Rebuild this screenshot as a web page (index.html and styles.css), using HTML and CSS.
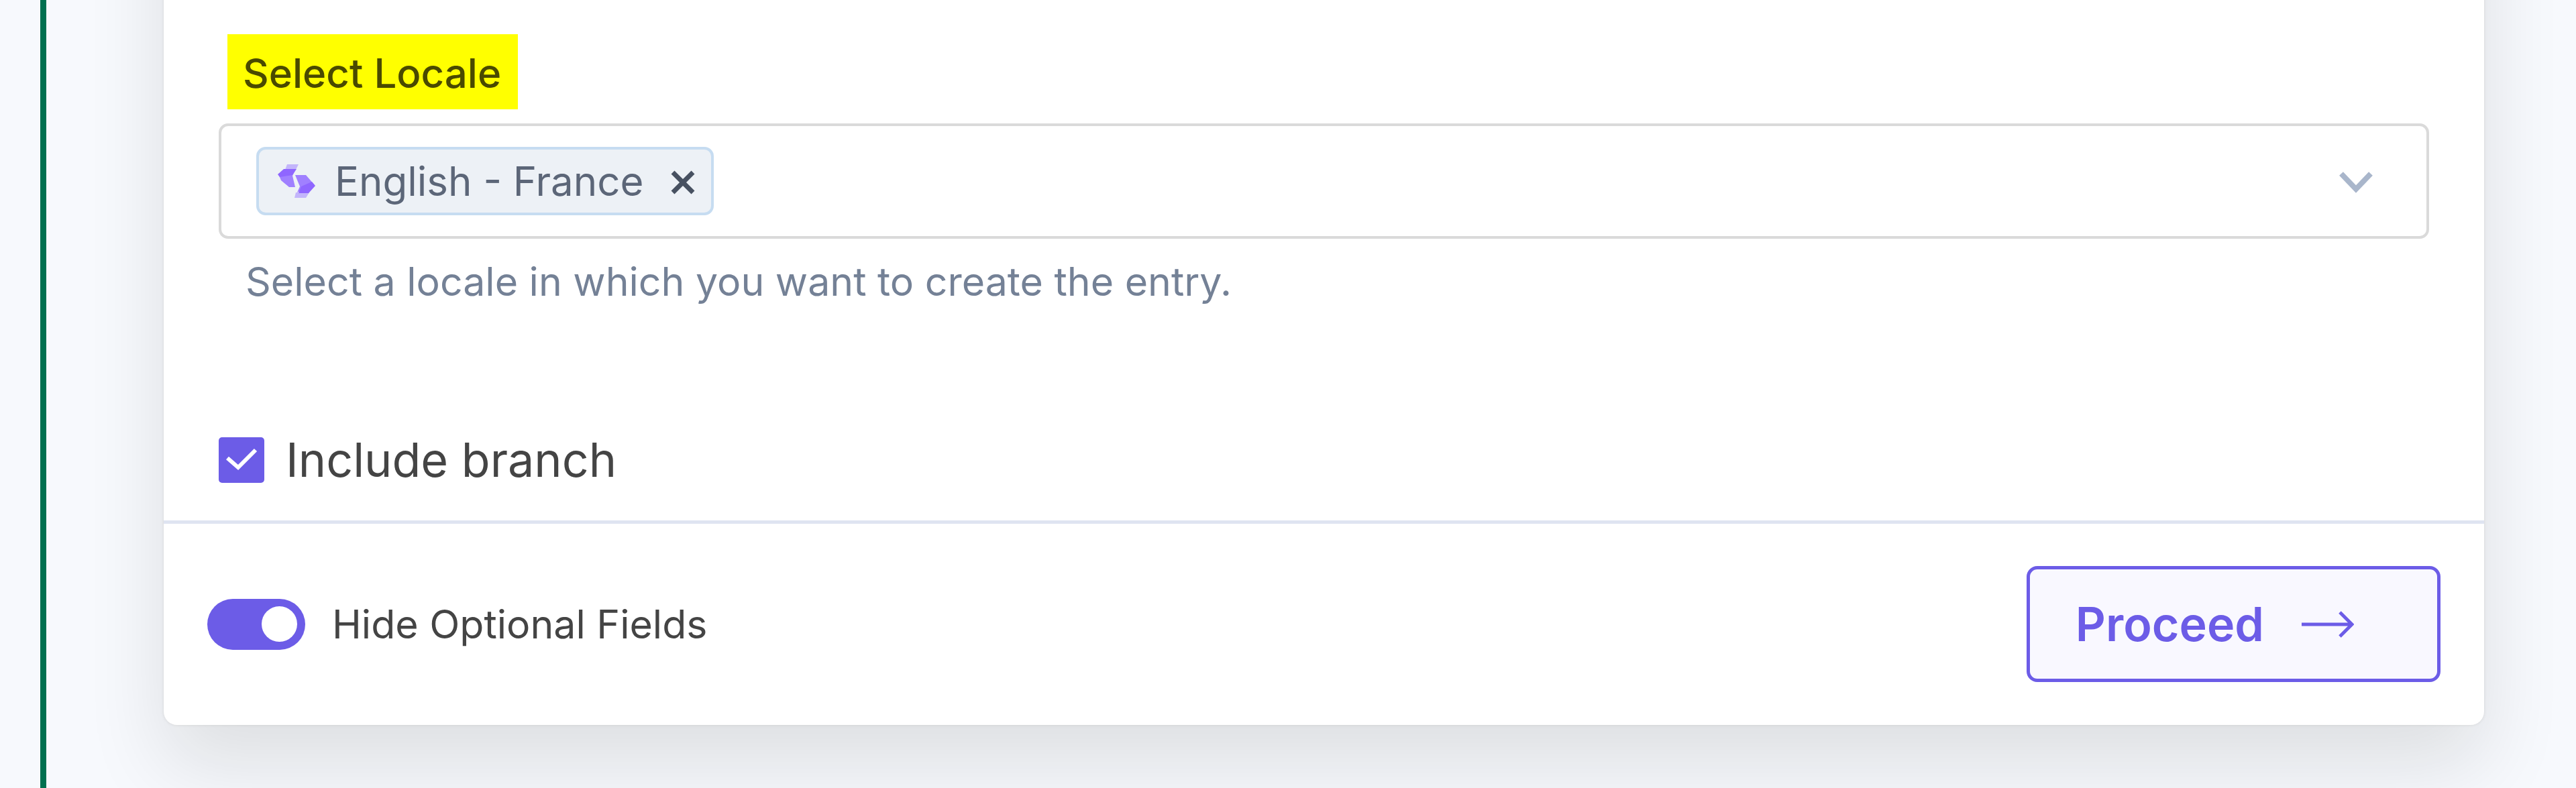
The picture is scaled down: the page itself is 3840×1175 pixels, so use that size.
FILE: index.html
```
<!DOCTYPE html>
<html lang="en">
<head>
    <meta charset="UTF-8">
    <meta name="viewport" content="width=device-width, initial-scale=1.0">
    <title>Select Locale</title>
    <link rel="stylesheet" href="styles.css">
</head>
<body>

    <main class="page">
        <form class="card">
            <div class="card-body">
                <label class="field-label" for="locale">Select Locale</label>
                <div class="select-box">
                    <span class="tag">
                        <svg class="tag-icon" viewBox="0 0 58 52" aria-hidden="true">
                            <path fill="#c3b5fb" d="M15 1h17l-4 8H12zM26 51h17l5-8H28z"/>
                            <path fill="#a080ff" d="M2 15l26-7-5 10 4 17H18L6 25zM27 17h16l13 15-26 11 4-9z"/>
                            <path fill="#8f66ff" d="M10 8h19l-6 9L4 20l-3-4zM32 44h15l10-11-5-6-16 7z"/>
                        </svg>
                        <span>English - France</span>
                        <button class="tag-remove" type="button" aria-label="Remove English - France">
                            <svg viewBox="0 0 36 36" aria-hidden="true"><path d="M3 3l30 30M33 3L3 33"/></svg>
                        </button>
                    </span>
                    <select class="locale" id="locale">
                        <option value=""></option>
                    </select>
                    <svg class="chevron" viewBox="0 0 50 32" aria-hidden="true"><path d="M3 3l22 23L47 3"/></svg>
                </div>
                <p class="help">Select a locale in which you want to create the entry.</p>
                <label class="check">
                    <input class="check-input" type="checkbox" checked>
                    <svg class="check-mark" viewBox="0 0 68 68" aria-hidden="true"><path d="M13 31l16 14 26-26"/></svg>
                    <span>Include branch</span>
                </label>
            </div>
            <div class="card-footer">
                <label class="toggle">
                    <input class="toggle-input" type="checkbox" role="switch" checked>
                    <span>Hide Optional Fields</span>
                </label>
                <button class="proceed" type="button">
                    <span>Proceed</span>
                    <svg class="arrow" viewBox="0 0 78 40" aria-hidden="true"><path d="M0 20h74M57 2l18 18-18 18"/></svg>
                </button>
            </div>
        </form>
    </main>

</body>
</html>
```

FILE: styles.css
```
* {
    box-sizing: border-box;
}

body {
    margin: 0;
    background: #f7f9fd;
    font-family: Inter, "Liberation Sans", sans-serif;
    font-size: 60px;
    line-height: 72px;
    color: #444;
}

button, select {
    font: inherit;
    cursor: pointer;
}

svg {
    display: block;
    fill: none;
}

.page {
    min-height: 100vh;
    margin-left: 60px;
    padding: 0 137px 94px 175px;
    border-left: 9px solid #00704f;
    overflow: hidden;
}

/* the top of the card runs off the page */
.card {
    margin-top: -200px;
    background: #fff;
    border-radius: 20px;
    box-shadow: 0 60px 120px rgba(20, 20, 0, 0.11), 0 0 4px rgba(60, 50, 30, 0.12);
}

.card-body {
    padding: 251px 82px 54px;
}

.field-label {
    display: inline-block;
    margin-left: 13px;
    padding: 22px 25px 18px 23px;
    background: #ffff00;
    color: #4a4a00;
    font-weight: 500;
}

.select-box {
    position: relative;
    display: flex;
    align-items: center;
    height: 172px;
    margin-top: 21px;
    padding: 0 52px;
    border: 4px solid #dadada;
    border-radius: 14px;
}

.tag {
    display: flex;
    align-items: center;
    height: 102px;
    padding: 0 24px 0 27px;
    border: 4px solid #c6dcf1;
    border-radius: 14px;
    background: #edf1f6;
    color: #5c6678;
}

.tag-icon {
    width: 58px;
    height: 52px;
    margin-right: 28px;
}

.tag-remove {
    margin-left: 40px;
    padding: 4px 0 0;
    border: 0;
    background: none;
}

.tag-remove svg {
    width: 36px;
    height: 36px;
    stroke: #475161;
    stroke-width: 7;
}

.locale {
    flex: 1;
    height: 100%;
    border: 0;
    background: none;
    appearance: none;
}

/* sits over the select */
.chevron {
    position: absolute;
    top: 68px;
    right: 80px;
    width: 50px;
    height: 32px;
    stroke: #a9b6cb;
    stroke-width: 8;
    pointer-events: none;
}

.help {
    margin: 28px 40px 0;
    color: #748196;
    font-size: 59px;
}

.check {
    position: relative;
    display: flex;
    align-items: center;
    gap: 32px;
    width: max-content;
    margin-top: 194px;
    font-size: 70px;
}

.check-input {
    width: 68px;
    height: 68px;
    margin: 0;
    border-radius: 5px;
    background: #6c5ce7;
    appearance: none;
}

.check-mark {
    position: absolute;
    left: 0;
    width: 68px;
    height: 68px;
    stroke: #fff;
    stroke-width: 6;
    pointer-events: none;
}

.card-footer {
    display: flex;
    align-items: center;
    justify-content: space-between;
    padding: 63px 65px 64px;
    border-top: 5px solid #dfe4f1;
}

.toggle {
    display: flex;
    align-items: center;
    gap: 40px;
    font-size: 59px;
}

.toggle-input {
    display: flex;
    align-items: center;
    justify-content: flex-end;
    width: 146px;
    height: 76px;
    margin: 0;
    padding: 12px;
    border-radius: 38px;
    background: #6c5ce7;
    appearance: none;
}

.toggle-input::before {
    content: "";
    width: 53px;
    height: 53px;
    border-radius: 50%;
    background: #fff;
}

.proceed {
    display: flex;
    align-items: center;
    gap: 56px;
    height: 173px;
    padding: 0 124px 0 68px;
    border: 5px solid #6c5ce7;
    border-radius: 16px;
    background: #f9f8ff;
    color: #6c5ce7;
    font-size: 70px;
    font-weight: 600;
}

.arrow {
    width: 78px;
    height: 40px;
    stroke: #6c5ce7;
    stroke-width: 5;
}
```
